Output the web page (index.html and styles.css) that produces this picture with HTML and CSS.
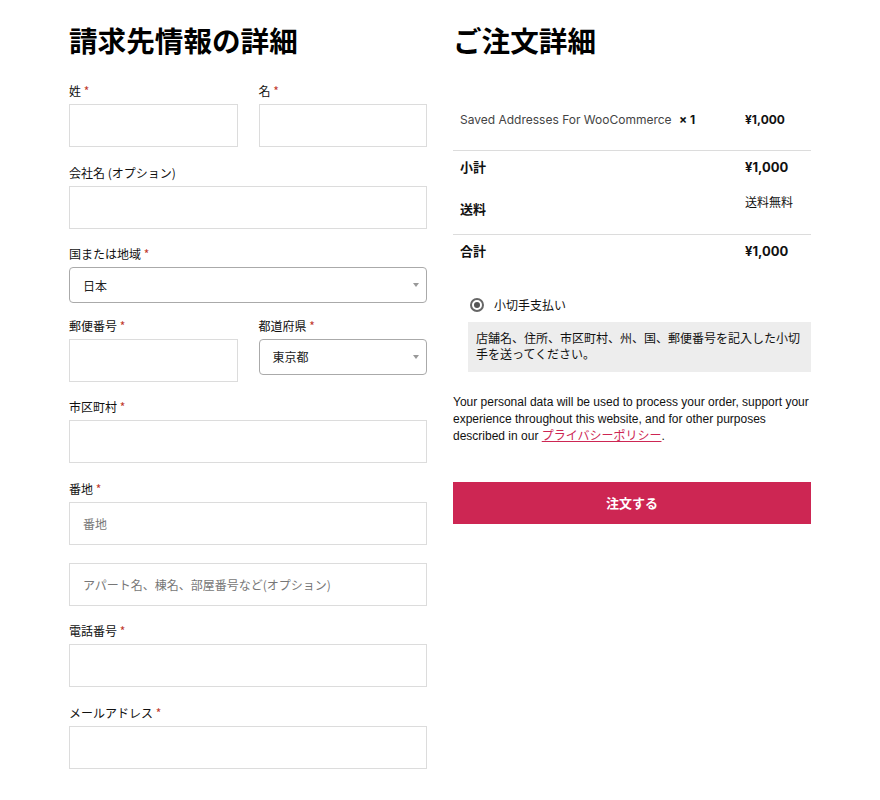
FILE: index.html
```html
<!DOCTYPE html>
<html lang="ja">
<head>
<meta charset="utf-8">
<title>チェックアウト</title>
<link rel="stylesheet" href="styles.css">
</head>
<body>
<div class="checkout">
  <section class="billing">
    <h2 class="title">請求先情報の詳細</h2>
    <div class="fields">
      <div class="row">
        <div class="field half">
          <label class="lbl">姓 <span class="req">*</span></label>
          <div class="input"></div>
        </div>
        <div class="field half">
          <label class="lbl">名 <span class="req">*</span></label>
          <div class="input"></div>
        </div>
      </div>
      <div class="field">
        <label class="lbl">会社名 (オプション)</label>
        <div class="input"></div>
      </div>
      <div class="field field-select">
        <label class="lbl">国または地域 <span class="req">*</span></label>
        <div class="select"><span>日本</span><i class="arrow"></i></div>
      </div>
      <div class="row">
        <div class="field half">
          <label class="lbl">郵便番号 <span class="req">*</span></label>
          <div class="input"></div>
        </div>
        <div class="field half">
          <label class="lbl">都道府県 <span class="req">*</span></label>
          <div class="select"><span>東京都</span><i class="arrow"></i></div>
        </div>
      </div>
      <div class="field">
        <label class="lbl">市区町村 <span class="req">*</span></label>
        <div class="input"></div>
      </div>
      <div class="field field-tight">
        <label class="lbl">番地 <span class="req">*</span></label>
        <div class="input"><span class="ph">番地</span></div>
      </div>
      <div class="field">
        <div class="input"><span class="ph">アパート名、棟名、部屋番号など(オプション)</span></div>
      </div>
      <div class="field">
        <label class="lbl">電話番号 <span class="req">*</span></label>
        <div class="input"></div>
      </div>
      <div class="field">
        <label class="lbl">メールアドレス <span class="req">*</span></label>
        <div class="input"></div>
      </div>
    </div>
  </section>

  <section class="order">
    <h2 class="title">ご注文詳細</h2>
    <table class="review">
      <tbody>
        <tr class="item">
          <td class="name">Saved Addresses For WooCommerce <strong class="qty">× 1</strong></td>
          <td class="amt small">¥1,000</td>
        </tr>
      </tbody>
      <tfoot>
        <tr class="sub">
          <th>小計</th>
          <td class="amt">¥1,000</td>
        </tr>
        <tr class="ship">
          <th>送料</th>
          <td class="free">送料無料</td>
        </tr>
        <tr class="total">
          <th>合計</th>
          <td class="amt">¥1,000</td>
        </tr>
      </tfoot>
    </table>

    <div class="payment">
      <div class="method">
        <span class="radio"><span class="dot"></span></span>
        <span class="method-name">小切手支払い</span>
      </div>
      <div class="pbox">店舗名、住所、市区町村、州、国、郵便番号を記入した小切手を送ってください。</div>
    </div>

    <p class="privacy">Your personal data will be used to process your order, support your experience throughout this website, and for other purposes described in our <a href="#" class="plink">プライバシーポリシー</a>.</p>

    <button class="place" type="button">注文する</button>
  </section>
</div>
</body>
</html>
```

FILE: styles.css
```css
* { box-sizing: border-box; }

body {
  margin: 0;
  background: #ffffff;
  color: #111;
  font-family: "Noto Sans CJK JP", "Noto Sans", sans-serif;
}

.checkout {
  display: flex;
  gap: 26px;
  padding: 22px 0 0 69px;
  width: 880px;
}

.billing, .order {
  width: 358px;
  flex: 0 0 358px;
}

.title {
  margin: 0;
  font-size: 28.6px;
  line-height: 36px;
  font-weight: 700;
  color: #000;
}

.fields {
  margin-top: 23px;
}

.row {
  display: flex;
  gap: 21px;
  align-items: flex-start;
}

.half {
  flex: 1 1 0;
}

.field {
  margin-bottom: 15.5px;
}

.field-select {
  margin-bottom: 12.5px;
}

.field-tight {
  margin-bottom: 18px;
}

.lbl {
  display: block;
  font-size: 12px;
  line-height: 20px;
  margin-bottom: 3px;
  color: #111;
}

.req {
  color: #c0392b;
}

.input {
  height: 43px;
  border: 1px solid #dcdcdc;
  background: #fff;
  display: flex;
  align-items: center;
  padding-left: 13px;
}

.ph {
  font-size: 12px;
  color: #777;
}

.select {
  height: 36px;
  border: 1px solid #aaa;
  border-radius: 4px;
  background: #fff;
  display: flex;
  align-items: center;
  justify-content: space-between;
  padding: 0 7px 0 13px;
  font-size: 12px;
  color: #222;
}

.arrow {
  width: 0;
  height: 0;
  border-left: 3.5px solid transparent;
  border-right: 3.5px solid transparent;
  border-top: 4px solid #999;
}

/* order review */
.review {
  margin-top: 34px;
  width: 100%;
  border-collapse: collapse;
  font-family: "Inter", "Noto Sans CJK JP", sans-serif;
}

.review td, .review th {
  padding: 0 7px;
  text-align: left;
  line-height: 18px;
}

.item td {
  padding-top: 19px;
  padding-bottom: 21px;
  border-bottom: 1px solid #dcdcdc;
}

.name {
  font-size: 12px;
  color: #444;
  width: 285px;
}

.qty {
  font-weight: 700;
  color: #111;
  margin-left: 4px;
}

.amt {
  font-weight: 700;
  font-size: 13px;
  color: #111;
}

.amt.small {
  font-size: 12px;
}

.review th {
  font-size: 13px;
  font-weight: 700;
  font-family: "Noto Sans CJK JP", sans-serif;
  color: #111;
}

.sub th, .sub td {
  padding-top: 7px;
  padding-bottom: 9px;
}

.ship th {
  height: 49px;
  vertical-align: middle;
  padding-top: 0;
  padding-bottom: 0;
  border-bottom: 1px solid #dcdcdc;
}

.ship td {
  vertical-align: top;
  padding-top: 8px;
  border-bottom: 1px solid #dcdcdc;
}

.free {
  font-size: 12px;
  font-family: "Noto Sans CJK JP", sans-serif;
  color: #111;
}

.total th, .total td {
  padding-top: 7px;
  padding-bottom: 9px;
}

/* payment */
.payment {
  margin-top: 27px;
  padding-left: 15px;
}

.method {
  display: flex;
  align-items: center;
  height: 18px;
  margin-bottom: 8px;
}

.radio {
  width: 14px;
  height: 14px;
  border: 2px solid #666;
  border-radius: 50%;
  margin-left: 2px;
  margin-right: 10px;
  display: flex;
  align-items: center;
  justify-content: center;
}

.dot {
  width: 6px;
  height: 6px;
  background: #555;
  border-radius: 50%;
}

.method-name {
  font-size: 12px;
  color: #111;
}

.pbox {
  background: #ededed;
  padding: 8px 6px 10px 8px;
  font-size: 12px;
  line-height: 16px;
  color: #111;
}

.privacy {
  margin: 22px 0 0;
  font-family: "Liberation Sans", Arial, sans-serif;
  font-size: 12px;
  line-height: 17px;
  color: #111;
}

.plink {
  color: #cd2653;
  font-family: "Noto Sans CJK JP", sans-serif;
  line-height: 1;
}

.place {
  display: block;
  margin-top: 37px;
  width: 100%;
  height: 42px;
  border: 0;
  background: #cd2653;
  color: #fff;
  font-family: "Noto Sans CJK JP", sans-serif;
  font-size: 13px;
  font-weight: 700;
  cursor: pointer;
}
```
